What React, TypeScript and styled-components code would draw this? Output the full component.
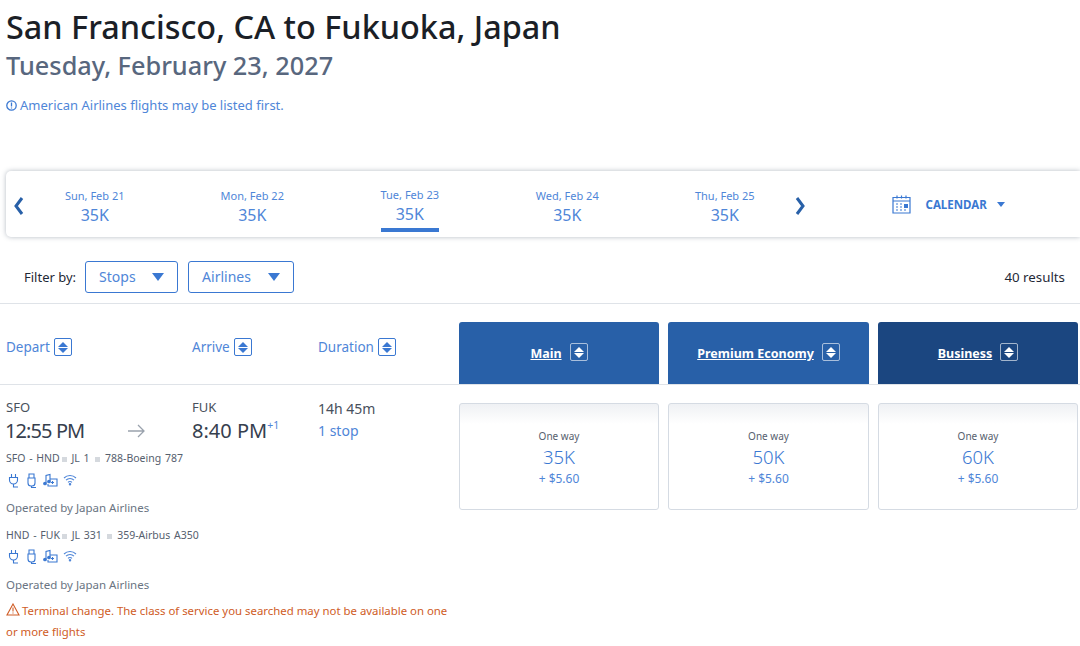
import * as React from "react";
import styled, { createGlobalStyle } from "styled-components";

const GlobalStyle = createGlobalStyle`
  html, body {
    margin: 0;
    padding: 0;
    background: #ffffff;
    font-family: "Noto Sans", "Open Sans", "Liberation Sans", sans-serif;
    overflow: hidden;
  }
`;

const blue = "#3a78d2";
const lightBlue = "#4f86d8";

const Page = styled.div`
  width: 1080px;
  height: 646px;
  overflow: hidden;
`;

const Header = styled.header`
  padding: 5px 0 0 6px;
  height: 165px;
  box-sizing: border-box;
`;

const Title = styled.h1`
  margin: 0;
  font-size: 32.4px;
  line-height: 43px;
  font-weight: 500;
  color: #1b1f27;
`;

const SubTitle = styled.h2`
  margin: 0;
  font-size: 25.3px;
  line-height: 34px;
  font-weight: 500;
  color: #58677e;
`;

const Notice = styled.div`
  display: flex;
  align-items: center;
  gap: 3px;
  margin-top: 13px;
  font-size: 13px;
  line-height: 20px;
  color: ${lightBlue};
`;

const DateStrip = styled.nav`
  display: flex;
  align-items: stretch;
  height: 66px;
  margin: 6px 0 0 6px;
  background: #ffffff;
  border-radius: 5px 0 0 5px;
  box-shadow: 0 0 5px rgba(70, 85, 105, 0.4);
`;

const Chevron = styled.div`
  display: flex;
  align-items: center;
  justify-content: center;
  width: 24px;
  padding-top: 3px;
  box-sizing: border-box;
`;

const Days = styled.div`
  display: grid;
  grid-template-columns: repeat(5, 157.5px);
  width: 787.5px;
  margin: 0 -15px 0 -14px;
`;

const Day = styled.div<{ $active?: boolean }>`
  display: flex;
  flex-direction: column;
  align-items: center;
  padding-top: ${(p) => (p.$active ? "17px" : "18px")};
  color: ${lightBlue};
`;

const DayInner = styled.div<{ $active?: boolean }>`
  display: flex;
  flex-direction: column;
  align-items: center;
  box-sizing: border-box;
  height: 44px;
  border-bottom: ${(p) => (p.$active ? `4px solid ${blue}` : "4px solid transparent")};
`;

const DayLabel = styled.span`
  font-size: 11px;
  line-height: 14px;
`;

const DayPrice = styled.span`
  font-size: 16px;
  line-height: 24px;
`;

const CalendarButton = styled.div`
  display: flex;
  align-items: center;
  margin-left: 79px;
  color: ${blue};
  font-size: 11.5px;
  font-weight: 700;
`;

const CalendarLabel = styled.span`
  margin: 0 10px 0 15px;
`;

const Caret = styled.span`
  width: 0;
  height: 0;
  border-left: 4px solid transparent;
  border-right: 4px solid transparent;
  border-top: 5px solid ${blue};
`;

const FilterRow = styled.div`
  display: flex;
  align-items: center;
  height: 67px;
  padding: 13px 15px 0 24px;
  box-sizing: border-box;
  border-bottom: 1px solid #dfe3e8;
  font-size: 13px;
  color: #1f2937;
`;

const FilterLabel = styled.span`
  margin-right: 9px;
`;

const FilterButton = styled.div<{ $width: number }>`
  display: flex;
  align-items: center;
  justify-content: space-between;
  box-sizing: border-box;
  width: ${(p) => p.$width}px;
  height: 32px;
  margin-right: 10px;
  padding: 0 13px;
  border: 1px solid ${blue};
  border-radius: 3px;
  color: ${lightBlue};
  font-size: 14px;
`;

const FilterCaret = styled.span`
  width: 0;
  height: 0;
  border-left: 6px solid transparent;
  border-right: 6px solid transparent;
  border-top: 8px solid ${blue};
`;

const Results = styled.span`
  margin-left: auto;
  font-size: 13.3px;
`;

const ColumnsRow = styled.div`
  display: flex;
  height: 81px;
  box-sizing: border-box;
  padding-top: 18px;
  border-bottom: 1px solid #dfe3e8;
`;

const SortHeads = styled.div`
  display: flex;
  width: 459px;
  padding: 16px 0 0 6px;
  box-sizing: border-box;
`;

const SortHead = styled.div<{ $width: number }>`
  display: flex;
  align-items: flex-start;
  gap: 4px;
  width: ${(p) => p.$width}px;
  color: ${lightBlue};
  font-size: 13.5px;
  line-height: 19px;
`;

const SortBox = styled.span<{ $light?: boolean }>`
  display: inline-flex;
  flex-direction: column;
  align-items: center;
  justify-content: center;
  gap: 1px;
  box-sizing: border-box;
  width: 18px;
  height: 18px;
  border: 1px solid ${(p) => (p.$light ? "rgba(255,255,255,0.6)" : blue)};
  border-radius: 2px;
`;

const Tri = styled.i<{ $up?: boolean; $light?: boolean }>`
  width: 0;
  height: 0;
  border-left: 5px solid transparent;
  border-right: 5px solid transparent;
  ${(p) => (p.$up ? "border-bottom" : "border-top")}: 5px solid ${(p) => (p.$light ? "#ffffff" : blue)};
`;

const FareHeads = styled.div`
  display: flex;
  gap: 9px;
`;

const FareHead = styled.div<{ $dark?: boolean; $width: number }>`
  display: flex;
  align-items: flex-start;
  justify-content: center;
  gap: 8px;
  width: ${(p) => p.$width}px;
  height: 62px;
  padding-top: 21px;
  box-sizing: border-box;
  background: ${(p) => (p.$dark ? "#1b4680" : "#2860a8")};
  border-radius: 3px 3px 0 0;
  color: #ffffff;
  font-size: 12.5px;
  line-height: 21px;
  font-weight: 700;
  text-decoration: underline;
`;

const ResultRow = styled.div`
  display: flex;
`;

const Flight = styled.section`
  width: 459px;
  padding: 13px 0 0 6px;
  box-sizing: border-box;
`;

const Summary = styled.div`
  display: flex;
`;

const Stop = styled.div<{ $width: number }>`
  display: flex;
  flex-direction: column;
  width: ${(p) => p.$width}px;
`;

const Airport = styled.span`
  font-size: 13px;
  line-height: 19px;
  color: #48505c;
`;

const Time = styled.span<{ $tight?: boolean }>`
  font-size: 20px;
  line-height: 28px;
  color: #36404e;
  white-space: nowrap;
  margin-left: ${(p) => (p.$tight ? "-1px" : "0")};
  letter-spacing: ${(p) => (p.$tight ? "-0.9px" : "0")};
`;

const Plus = styled.sup`
  font-size: 10.5px;
  line-height: 0;
  color: ${lightBlue};
  vertical-align: 9px;
`;

const Arrow = styled.div`
  display: flex;
  align-items: center;
  width: 66px;
  padding: 18px 0 0 1px;
  box-sizing: border-box;
`;

const Duration = styled.span`
  font-size: 14px;
  line-height: 22px;
  color: #48505c;
`;

const Stops = styled.span`
  font-size: 14px;
  line-height: 22px;
  color: ${lightBlue};
`;

const Leg = styled.div<{ $top: number }>`
  margin-top: ${(p) => p.$top}px;
  font-size: 10.5px;
  line-height: 15px;
  word-spacing: 1px;
  color: #56606e;
  white-space: nowrap;
`;

const Square = styled.i`
  display: inline-block;
  width: 5px;
  height: 5px;
  margin: 0 1px 0 2px;
  vertical-align: middle;
  background: #d5d9de;
`;

const Amenities = styled.div<{ $top: number }>`
  display: flex;
  align-items: center;
  gap: 5px;
  height: 16px;
  margin: ${(p) => p.$top}px 0 0 1px;
`;

const Operated = styled.div<{ $top: number }>`
  margin-top: ${(p) => p.$top}px;
  font-size: 11.5px;
  line-height: 16px;
  color: #6a7482;
`;

const Warning = styled.div`
  margin-top: 7px;
  width: 452px;
  font-size: 11.4px;
  line-height: 21px;
  color: #cf5c26;
`;

const WarningIcon = styled.svg`
  margin-right: 2px;
  vertical-align: -1px;
`;

const Fares = styled.div`
  display: flex;
  align-items: flex-start;
  gap: 9px;
  padding-top: 18px;
`;

const FareCard = styled.div<{ $width: number }>`
  display: flex;
  flex-direction: column;
  align-items: center;
  box-sizing: border-box;
  width: ${(p) => p.$width}px;
  height: 107px;
  padding-top: 25px;
  border: 1px solid #d5dbe3;
  border-radius: 3px;
  background: linear-gradient(#eff1f4 0, #ffffff 20px);
`;

const OneWay = styled.span`
  font-size: 10px;
  line-height: 14px;
  color: #56606e;
`;

const Miles = styled.span`
  font-size: 18.5px;
  font-weight: 300;
  line-height: 28px;
  color: ${blue};
`;

const Taxes = styled.span`
  font-size: 12px;
  line-height: 16px;
  color: ${lightBlue};
`;

const days = [
  { label: "Sun, Feb 21", price: "35K" },
  { label: "Mon, Feb 22", price: "35K" },
  { label: "Tue, Feb 23", price: "35K", active: true },
  { label: "Wed, Feb 24", price: "35K" },
  { label: "Thu, Feb 25", price: "35K" },
];

const fares = [
  { miles: "35K", width: 200 },
  { miles: "50K", width: 201 },
  { miles: "60K", width: 200 },
];

const SortIcon = ({ light }: { light?: boolean }) => (
  <SortBox $light={light}>
    <Tri $up $light={light} />
    <Tri $light={light} />
  </SortBox>
);

const AmenityIcons = ({ top }: { top: number }) => (
  <Amenities $top={top}>
    <svg width="13" height="15" viewBox="0 0 13 15" fill="none" stroke={blue} strokeWidth="1.1">
      <path d="M4.5 1v3.5M8.5 1v3.5M2.5 4.5h8v2.5a4 4 0 0 1-8 0zM6.5 11v3H11" />
    </svg>
    <svg width="13" height="15" viewBox="0 0 13 15" fill="none" stroke={blue} strokeWidth="1.1">
      <path d="M4 1h5v4H4zM3 5h7v5a3 3 0 0 1-3 3H6a3 3 0 0 1-3-3zM6.500 13v1.500H11" />
    </svg>
    <svg width="15" height="15" viewBox="0 0 15 15" fill="none" stroke={blue} strokeWidth="1.1">
      <path d="M3 10V2.500l4-1V8M7 6h7v7H5v-2" />
      <circle cx="2" cy="10.500" r="1.300" fill={blue} />
      <circle cx="6" cy="8.500" r="1.300" fill={blue} />
      <path d="M8 9.500h3M9.500 8v3" />
    </svg>
    <svg width="14" height="12" viewBox="0 0 14 12" fill="none" stroke={lightBlue} strokeWidth="1.1">
      <path d="M1 4a8.500 8.500 0 0 1 12 0M3 6.200a5.600 5.600 0 0 1 8 0M5 8.400a2.800 2.800 0 0 1 4 0" />
      <circle cx="7" cy="10.300" r="0.700" fill={lightBlue} />
    </svg>
  </Amenities>
);

export default function App() {
  return (
    <Page>
      <GlobalStyle />
      <Header>
        <Title>San Francisco, CA to Fukuoka, Japan</Title>
        <SubTitle>Tuesday, February 23, 2027</SubTitle>
        <Notice>
          <svg width="11" height="11" viewBox="0 0 11 11" fill="none" stroke={blue} strokeWidth="1.300">
            <circle cx="5.500" cy="5.500" r="4.700" />
            <path d="M5.500 2.500v4M5.500 7.500v1" />
          </svg>
          American Airlines flights may be listed first.
        </Notice>
      </Header>

      <DateStrip>
        <Chevron>
          <svg width="11" height="20" viewBox="0 0 11 20" fill="none" stroke="#2860a8" strokeWidth="3">
            <path d="M9 2 3 10l6 8" />
          </svg>
        </Chevron>
        <Days>
          {days.map((d) => (
            <Day key={d.label} $active={d.active}>
              <DayInner $active={d.active}>
                <DayLabel>{d.label}</DayLabel>
                <DayPrice>{d.price}</DayPrice>
              </DayInner>
            </Day>
          ))}
        </Days>
        <Chevron>
          <svg width="11" height="20" viewBox="0 0 11 20" fill="none" stroke="#2860a8" strokeWidth="3">
            <path d="m2 2 6 8-6 8" />
          </svg>
        </Chevron>
        <CalendarButton>
          <svg width="19" height="20" viewBox="0 0 19 20" fill="none" stroke={blue} strokeWidth="1.200">
            <path d="M1 3.500h17V19H1zM1 7h17M5 1.500v3M9.500 1.500v3M14 1.500v3" />
            <path d="M4 10h2M8 10h2M4 13h2M8 13h2M4 16h2M8 16h2M12 16h2" strokeDasharray="2 1" />
            <rect x="12" y="10" width="4" height="4" fill={blue} stroke="none" />
          </svg>
          <CalendarLabel>CALENDAR</CalendarLabel>
          <Caret />
        </CalendarButton>
      </DateStrip>

      <FilterRow>
        <FilterLabel>Filter by:</FilterLabel>
        <FilterButton $width={93}>
          Stops
          <FilterCaret />
        </FilterButton>
        <FilterButton $width={106}>
          Airlines
          <FilterCaret />
        </FilterButton>
        <Results>40 results</Results>
      </FilterRow>

      <ColumnsRow>
        <SortHeads>
          <SortHead $width={186}>
            Depart <SortIcon />
          </SortHead>
          <SortHead $width={126}>
            Arrive <SortIcon />
          </SortHead>
          <SortHead $width={130}>
            Duration <SortIcon />
          </SortHead>
        </SortHeads>
        <FareHeads>
          <FareHead $width={200}>
            Main <SortIcon light />
          </FareHead>
          <FareHead $width={201}>
            Premium Economy <SortIcon light />
          </FareHead>
          <FareHead $width={200} $dark>
            Business <SortIcon light />
          </FareHead>
        </FareHeads>
      </ColumnsRow>

      <ResultRow>
        <Flight>
          <Summary>
            <Stop $width={120}>
              <Airport>SFO</Airport>
              <Time $tight>12:55 PM</Time>
            </Stop>
            <Arrow>
              <svg width="18" height="14" viewBox="0 0 18 14" fill="none" stroke="#9aa2ad" strokeWidth="1.300">
                <path d="M1 7h16M11 1l6 6-6 6" />
              </svg>
            </Arrow>
            <Stop $width={126}>
              <Airport>FUK</Airport>
              <Time>
                8:40 PM<Plus>+1</Plus>
              </Time>
            </Stop>
            <Stop $width={120}>
              <Duration>14h 45m</Duration>
              <Stops>1 stop</Stops>
            </Stop>
          </Summary>
          <Leg $top={6}>
            SFO - HND<Square /> JL 1 <Square /> 788-Boeing 787
          </Leg>
          <AmenityIcons top={6} />
          <Operated $top={12}>Operated by Japan Airlines</Operated>
          <Leg $top={12}>
            HND - FUK<Square /> JL 331 <Square /> 359-Airbus A350
          </Leg>
          <AmenityIcons top={5} />
          <Operated $top={13}>Operated by Japan Airlines</Operated>
          <Warning>
            <WarningIcon width="14" height="13" viewBox="0 0 14 13" fill="none" stroke="#cf5c26" strokeWidth="1.100">
              <path d="M7 1 13 12H1zM7 4.500v4M7 9.500v1" />
            </WarningIcon>
            Terminal change. The class of service you searched may not be available on one or more flights
          </Warning>
        </Flight>
        <Fares>
          {fares.map((f) => (
            <FareCard key={f.miles} $width={f.width}>
              <OneWay>One way</OneWay>
              <Miles>{f.miles}</Miles>
              <Taxes>+ $5.60</Taxes>
            </FareCard>
          ))}
        </Fares>
      </ResultRow>
    </Page>
  );
}
